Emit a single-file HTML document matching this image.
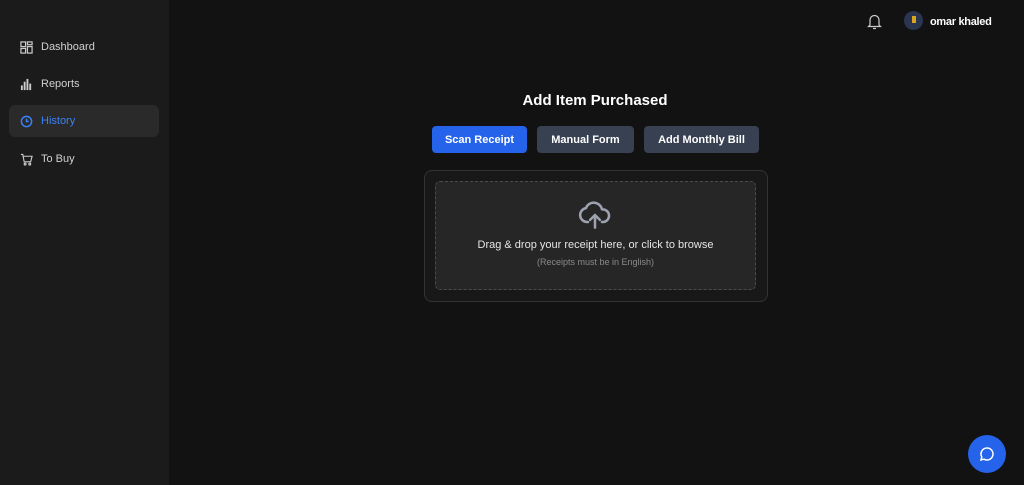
<!DOCTYPE html>
<html><head><style>
*{box-sizing:border-box;margin:0;padding:0}
body{width:1024px;height:485px;background:#121212;font-family:"Liberation Sans",sans-serif;position:relative;overflow:hidden;color:#fff}
.side{position:absolute;left:0;top:0;width:169px;height:485px;background:#1b1b1b}
.item{position:absolute;left:9px;width:150px;height:32px;display:flex;align-items:center;padding-left:11px;font-size:11px;color:#d0d0d0}
.item svg{width:13px;height:13px;margin-right:8px}
.act{background:#2a2a2a;border-radius:6px;color:#3b82f6}
h1{position:absolute;left:0;width:1190px;top:92px;text-align:center;font-size:15px;font-weight:bold}
.btn{position:absolute;top:126px;height:27px;border-radius:4px;font-size:11px;font-weight:bold;display:flex;align-items:center;justify-content:center;background:#374151}
.card{position:absolute;left:424px;top:170px;width:344px;height:132px;border:1px solid #333;border-radius:8px;background:#181818}
.drop{position:absolute;left:435px;top:181px;width:321px;height:109px;border:1px dashed #4b4b4b;border-radius:5px;background:#262626}
</style></head><body>
<div class="side">
<div class="item" style="top:31px"><svg viewBox="0 0 14 14" fill="none" stroke="#ccc" stroke-width="1.3"><rect x="1" y="1" width="5" height="5"/><rect x="8" y="1" width="5" height="3"/><rect x="1" y="8" width="5" height="5"/><rect x="8" y="6" width="5" height="7"/></svg>Dashboard</div>
<div class="item" style="top:68px"><svg viewBox="0 0 14 14" fill="#ccc"><rect x="1" y="8" width="2" height="5"/><rect x="4" y="4" width="2" height="9"/><rect x="7" y="1" width="2" height="12"/><rect x="10" y="6" width="2" height="7"/></svg>Reports</div>
<div class="item act" style="top:105px"><svg viewBox="0 0 14 14" fill="none" stroke="#3b82f6" stroke-width="1.6"><circle cx="7" cy="7" r="5.5"/><path d="M7 4v3h2.5"/></svg>History</div>
<div class="item" style="top:143px"><svg viewBox="0 0 14 14" fill="none" stroke="#ccc" stroke-width="1.2"><path d="M1 1.5h2l1.5 8h7l1.5-6H4"/><circle cx="5.5" cy="12" r="1"/><circle cx="10.5" cy="12" r="1"/></svg>To Buy</div>
</div>
<svg style="position:absolute;left:867px;top:13px" width="15" height="17" viewBox="0 0 15 17" fill="none" stroke="#ccc" stroke-width="1.2"><path d="M3 12V7a4.5 4.5 0 0 1 9 0v5l1.5 1.5h-12z"/><path d="M6 15.5h3"/></svg>
<div style="position:absolute;left:904px;top:11px;width:19px;height:19px;border-radius:50%;background:#2a3550"><div style="position:absolute;left:8px;top:5px;width:4px;height:7px;background:#d9a520"></div></div>
<div style="position:absolute;left:930px;top:16px;font-size:11px;font-weight:bold;letter-spacing:-0.3px">omar khaled</div>
<h1>Add Item Purchased</h1>
<div class="btn" style="left:432px;width:95px;background:#2563eb">Scan Receipt</div>
<div class="btn" style="left:537px;width:97px">Manual Form</div>
<div class="btn" style="left:644px;width:115px">Add Monthly Bill</div>
<div class="card"></div>
<div class="drop">
<svg style="position:absolute;left:142px;top:19px" width="34" height="28" viewBox="0 0 24 20" fill="none" stroke="#9ca3af" stroke-width="1.8" stroke-linecap="round" stroke-linejoin="round"><path d="M7 15H6a5 5 0 0 1-.5-9.9A6 6 0 0 1 17 6a4.5 4.5 0 0 1 1 9h-1"/><path d="M12 19v-9M8.5 13.5 12 10l3.5 3.5"/></svg>
<div style="position:absolute;top:57px;width:100%;text-align:center;font-size:11px;color:#e5e5e5">Drag &amp; drop your receipt here, or click to browse</div>
<div style="position:absolute;top:75px;width:100%;text-align:center;font-size:9px;color:#8a8a8a">(Receipts must be in English)</div>
</div>
<div style="position:absolute;left:968px;top:435px;width:38px;height:38px;border-radius:50%;background:#2563eb"><svg style="position:absolute;left:11px;top:11px" width="16" height="16" viewBox="0 0 16 16" fill="none" stroke="#fff" stroke-width="1.5"><path d="M8 2a6 6 0 1 1-3 11.2L2 14l.8-3A6 6 0 0 1 8 2z"/></svg></div>
</body></html>
